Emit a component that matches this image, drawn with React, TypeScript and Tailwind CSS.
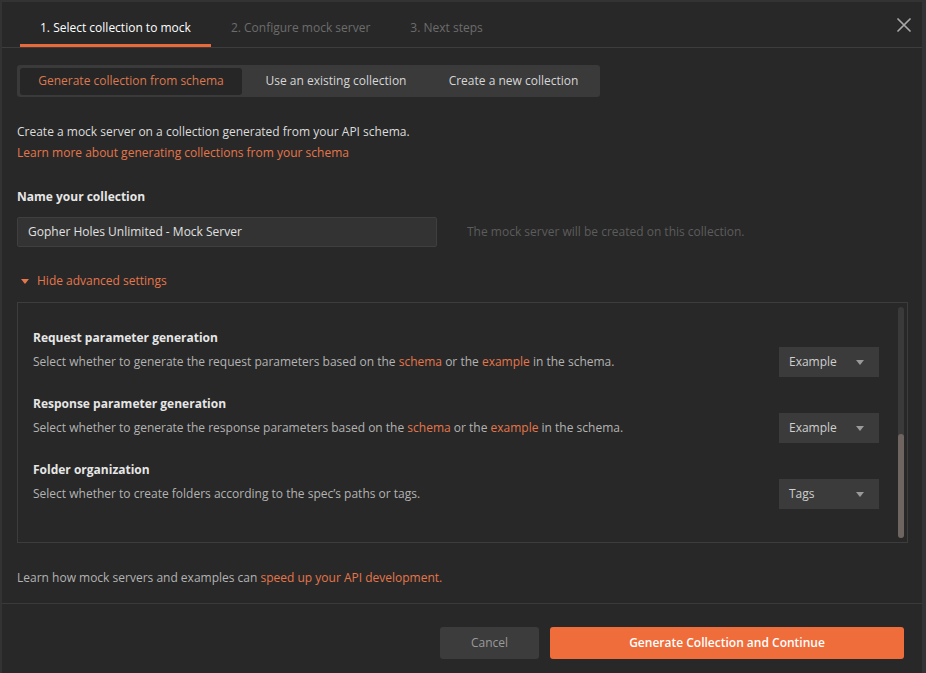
const font = { fontFamily: '"Open Sans", "Noto Sans", sans-serif' }

function Caret() {
  return (
    <svg width="8" height="5" viewBox="0 0 8 5" className="fill-current">
      <path d="M0 0h8L4 5z" />
    </svg>
  )
}

function Select({ value }: { value: string }) {
  return (
    <div className="flex h-[30px] w-[100px] shrink-0 items-center justify-between bg-[#3b3b3b] pl-[10px] pr-[15px] text-[#cfcfcf]">
      <span>{value}</span>
      <span className="text-[#9a9a9a]"><Caret /></span>
    </div>
  )
}

function Setting({ title, children, value }: { title: string; children: React.ReactNode; value: string }) {
  return (
    <div>
      <div className="font-bold leading-[18px] text-[#e6e6e6]">{title}</div>
      <div className="flex h-[30px] items-center justify-between">
        <div className="leading-[18px] text-[#b3b3b3]">{children}</div>
        <Select value={value} />
      </div>
    </div>
  )
}

const orange = 'text-[#e5764b]'

export default function App() {
  return (
    <div style={font} className="flex h-[673px] w-[926px] flex-col border-l-2 border-t-2 border-r-4 border-[#333] bg-[#282828] text-[12px]">
      <div className="flex h-[46px] justify-between border-b border-[#3d3d3d] pl-[18px] pr-[11px]">
        <div className="flex self-end leading-[20px]">
          <div className="border-b-[3px] border-[#e8693a] px-[20px] pb-[6px] text-white">1. Select collection to mock</div>
          <div className="px-[20px] pb-[9px] text-[#6c6c6c]">2. Configure mock server</div>
          <div className="px-[20px] pb-[9px] text-[#6c6c6c]">3. Next steps</div>
        </div>
        <svg width="14" height="14" viewBox="0 0 14 14" className="mt-[16px] stroke-[#a8a8a8]" strokeWidth="1.7" strokeLinecap="round">
          <path d="M1 1l12 12M13 1L1 13" />
        </svg>
      </div>

      <div className="flex flex-1 flex-col px-[15px]">
        <div className="mt-[17px] flex h-[32px] w-[583px] items-center rounded-[3px] bg-[#3a3a3a] px-[3px]">
          <div className="flex h-[27px] w-[222px] items-center justify-center rounded-[3px] bg-[#262626] text-[#dc7850]">Generate collection from schema</div>
          <div className="flex h-[27px] w-[188px] items-center justify-center text-[#d6d6d6]">Use an existing collection</div>
          <div className="flex h-[27px] w-[167px] items-center justify-center text-[#d6d6d6]">Create a new collection</div>
        </div>

        <div className="mt-[25px] leading-[20px] text-[#dcdcdc]">Create a mock server on a collection generated from your API schema.</div>
        <div className={`mt-[1px] leading-[20px] ${orange}`}>Learn more about generating collections from your schema</div>

        <div className="mt-[24px] font-bold leading-[20px] text-[#e6e6e6]">Name your collection</div>
        <div className="mt-[10px] flex items-center">
          <div className="flex h-[30px] w-[420px] items-center rounded-[2px] border border-[#3f3f3f] bg-[#333333] px-[10px] text-[#e0e0e0]">Gopher Holes Unlimited - Mock Server</div>
          <div className="ml-[30px] text-[#5c5c5c]">The mock server will be created on this collection.</div>
        </div>

        <div className={`mt-[24px] flex items-center gap-[8px] pl-[4px] leading-[20px] ${orange}`}>
          <Caret />
          <span>Hide advanced settings</span>
        </div>

        <div className="mt-[11px] flex h-[241px] w-[891px] border border-[#3d3d3d]">
          <div className="flex flex-1 flex-col gap-[18px] pl-[15px] pr-[19px] pt-[26px]">
            <Setting title="Request parameter generation" value="Example">
              Select whether to generate the request parameters based on the <span className={orange}>schema</span> or the <span className={orange}>example</span> in the schema.
            </Setting>
            <Setting title="Response parameter generation" value="Example">
              Select whether to generate the response parameters based on the <span className={orange}>schema</span> or the <span className={orange}>example</span> in the schema.
            </Setting>
            <Setting title="Folder organization" value="Tags">
              Select whether to create folders according to the spec’s paths or tags.
            </Setting>
          </div>
          <div className="my-[4px] mr-[3px] flex w-[6px] flex-col rounded-full bg-[#3a3a3a]">
            <div className="flex-1" />
            <div className="h-[104px] rounded-full bg-[#6e6560]" />
          </div>
        </div>

        <div className="mt-[25px] leading-[20px] text-[#b3b3b3]">
          Learn how mock servers and examples can <span className={orange}>speed up your API development.</span>
        </div>
      </div>

      <div className="flex h-[70px] items-start justify-end gap-[11px] border-t border-[#3a3a3a] pr-[18px] pt-[23px]">
        <button className="h-[32px] w-[99px] rounded-[3px] bg-[#3c3c3c] text-[#9a9a9a]">Cancel</button>
        <button className="h-[32px] w-[354px] rounded-[3px] bg-[#ef6c3b] font-semibold text-white">Generate Collection and Continue</button>
      </div>
    </div>
  )
}
